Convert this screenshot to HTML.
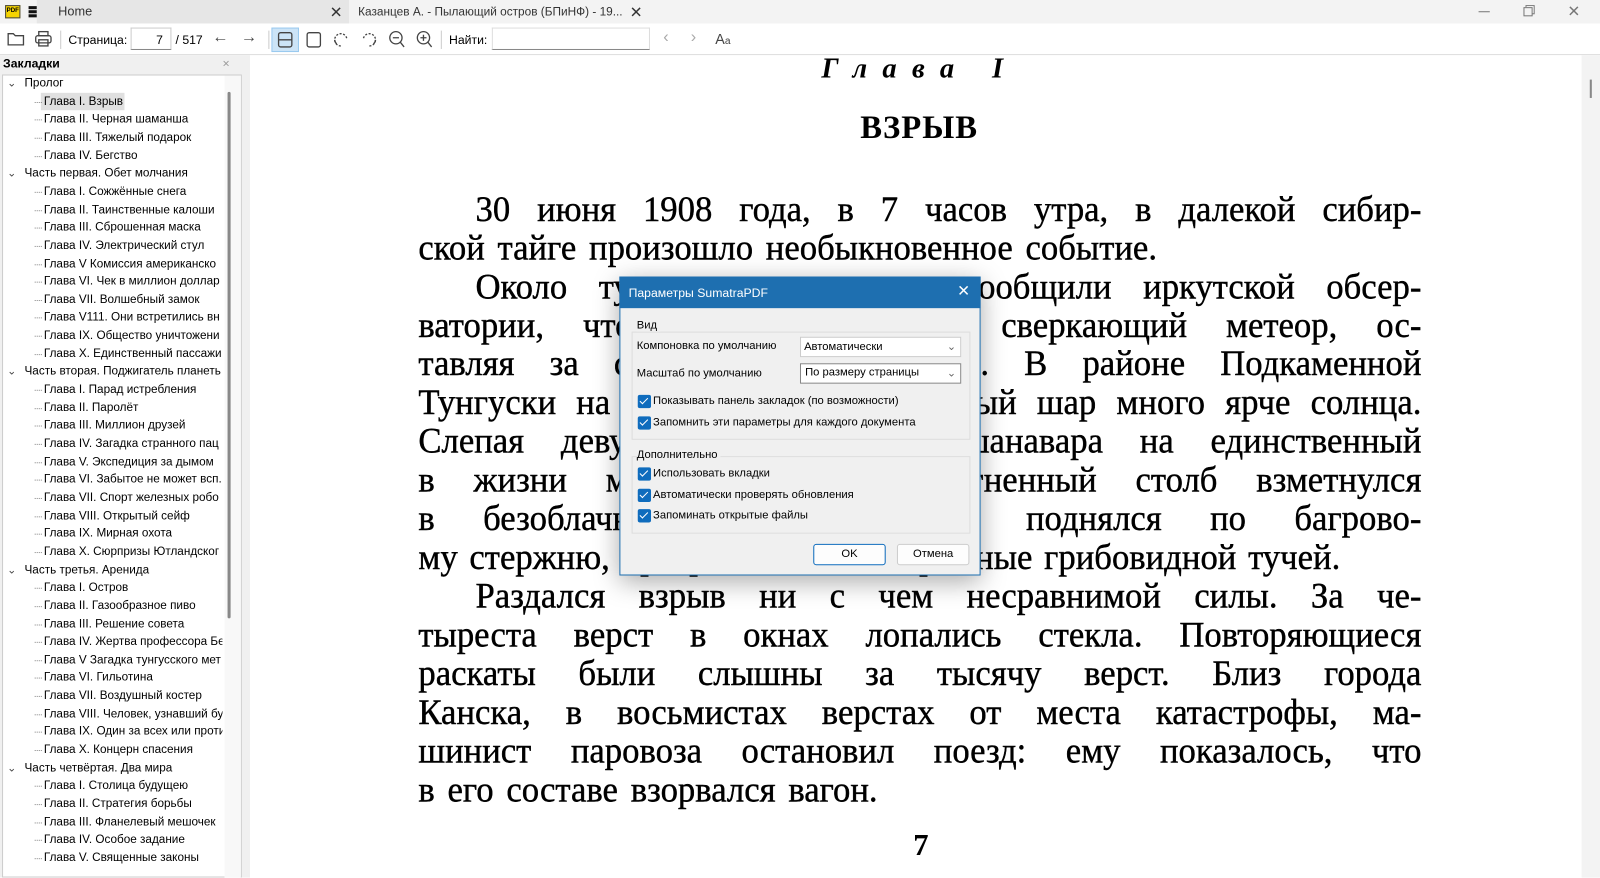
<!DOCTYPE html>
<html><head><meta charset="utf-8"><style>
*{box-sizing:border-box;margin:0;padding:0}
body{width:1600px;height:860px;overflow:hidden;background:#fff;font-family:"Liberation Sans","Noto Sans CJK SC",sans-serif;font-size:12px;color:#000}
#root{position:absolute;left:0;top:0;width:1568px;height:843px;transform:scale(1.0204);transform-origin:0 0}
.abs{position:absolute}
#tabs{left:0;top:0;width:1568px;height:23px;background:#f3f3f3}
#tb{left:0;top:23px;width:1568px;height:31px;background:#fff;border-bottom:1px solid #ddd}
.tree div{position:absolute;white-space:nowrap;font-size:11.5px;line-height:17px}
.pg{position:absolute;left:410px;width:983px;font-family:"Liberation Serif",serif;font-size:34px;line-height:38px;white-space:nowrap;text-align:justify;text-align-last:justify;transform:scaleY(1.05);-webkit-text-stroke:0.4px #000}
.nj{text-align-last:left}
.ico{position:absolute;stroke:#444;fill:none;stroke-width:1.3}
.cb{position:absolute;width:13px;height:13px;background:#0f6cbd;border-radius:2px}
.cb:after{content:"";position:absolute;left:4px;top:1px;width:3px;height:7px;border:solid #fff;border-width:0 1.5px 1.5px 0;transform:rotate(45deg)}
.dl{position:absolute;font-size:11px;white-space:nowrap}
</style></head><body><div id="root">
<div id="tabs" class="abs"></div>
<div class="abs" style="left:5px;top:5px;width:15px;height:13px;background:#f5d400;border:1px solid #444;font-size:6px;font-weight:bold;line-height:11px;text-align:center">PDF</div>
<div class="abs" style="left:28px;top:6px;width:14px;height:2.5px;background:#111;box-shadow:0 4px 0 #111,0 8px 0 #111"></div>
<div class="abs" style="left:36px;top:0;width:306px;height:23px;background:#e6e6e6"></div>
<div class="abs" style="left:57px;top:4px;font-size:12.5px;color:#333">Home</div>
<div class="abs" style="left:323px;top:3px;font-size:15px;color:#333">✕</div>
<div class="abs" style="left:351px;top:5px;font-size:11.6px;color:#333">Казанцев А. - Пылающий остров (БПиНФ) - 19...</div>
<div class="abs" style="left:617px;top:3px;font-size:15px;color:#333">✕</div>
<div class="abs" style="left:1449px;top:11px;width:11px;height:1px;background:#777"></div>
<div class="abs" style="left:1493px;top:7px;width:9px;height:9px;border:1px solid #777;box-shadow:2px -2px 0 -1px #fff,2px -2px 0 0 #777"></div>
<div class="abs" style="left:1536px;top:2px;font-size:15px;color:#777">✕</div>

<div id="tb" class="abs"></div>
<svg class="ico" style="left:6px;top:29px" width="20" height="18"><path d="M2 4h5l2 2h8v9H2z"/></svg>
<svg class="ico" style="left:33px;top:29px" width="20" height="18"><rect x="5" y="2" width="9" height="4"/><rect x="2" y="6" width="15" height="7" rx="2"/><rect x="5" y="10" width="9" height="6"/></svg>
<div class="abs" style="left:59px;top:30px;width:1px;height:18px;background:#ccc"></div>
<div class="abs" style="left:67px;top:32px;font-size:12px">Страница:</div>
<div class="abs" style="left:128px;top:27px;width:40px;height:22px;border:1px solid #ccc;border-bottom-color:#888"></div>
<div class="abs" style="left:153px;top:32px;font-size:12px">7</div>
<div class="abs" style="left:172px;top:32px;font-size:12px">/ 517</div>
<div class="abs" style="left:208px;top:28px;font-size:16px;color:#444">←</div>
<div class="abs" style="left:236px;top:28px;font-size:16px;color:#444">→</div>
<div class="abs" style="left:263px;top:30px;width:1px;height:18px;background:#ccc"></div>
<div class="abs" style="left:266px;top:27px;width:27px;height:24px;background:#cce4f7;border:1px solid #99c9ef"></div>
<svg class="ico" style="left:270px;top:29px" width="20" height="20"><rect x="3" y="3" width="13" height="14" rx="2"/><path d="M3 10h13"/></svg>
<svg class="ico" style="left:298px;top:29px" width="20" height="20"><rect x="3" y="3" width="13" height="14" rx="2"/></svg>
<svg class="ico" style="left:324px;top:29px" width="20" height="20"><path d="M10 16a6 6 0 1 1 6-6" stroke-dasharray="2 1.5"/><path d="M6 14a6 6 0 0 1-2-4"/></svg>
<svg class="ico" style="left:352px;top:29px" width="20" height="20"><path d="M10 16a6 6 0 1 0-6-6" stroke-dasharray="2 1.5"/><path d="M14 14a6 6 0 0 0 2-4"/></svg>
<svg class="ico" style="left:379px;top:29px" width="20" height="20"><circle cx="9" cy="8" r="6"/><path d="M6 8h6M13 12l4 5"/></svg>
<svg class="ico" style="left:406px;top:29px" width="20" height="20"><circle cx="9" cy="8" r="6"/><path d="M6 8h6M9 5v6M13 12l4 5"/></svg>
<div class="abs" style="left:432px;top:30px;width:1px;height:18px;background:#ccc"></div>
<div class="abs" style="left:440px;top:32px;font-size:12px">Найти:</div>
<div class="abs" style="left:482px;top:27px;width:155px;height:22px;border:1px solid #ddd;border-bottom-color:#888"></div>
<div class="abs" style="left:650px;top:28px;font-size:16px;color:#aaa">‹</div>
<div class="abs" style="left:677px;top:28px;font-size:16px;color:#aaa">›</div>
<div class="abs" style="left:701px;top:30px;font-size:14px;color:#444">A<span style="font-size:10px">a</span></div>

<div class="abs" style="left:0;top:54px;width:245px;height:806px;background:#f0f0f0"></div>
<div class="abs" style="left:3px;top:55px;font-weight:bold;font-size:12px">Закладки</div>
<div class="abs" style="left:218px;top:55px;font-size:12px;color:#999">×</div>
<div class="abs" style="left:2px;top:73px;width:235px;height:787px;background:#fff;border:1px solid #ccc"></div>
<div class="abs" style="left:220px;top:74px;width:16px;height:786px;background:#f8f8f8"></div>
<div class="abs" style="left:223px;top:90px;width:3px;height:516px;background:#888;border-radius:2px"></div>
<div class="abs" style="left:40px;top:91px;width:82px;height:17px;background:#e0e0e0"></div>
<div class="tree" id="tree"></div>

<div class="abs" style="left:1550px;top:54px;width:30px;height:806px;background:#f3f3f3"></div>
<div class="abs" style="left:1558px;top:78px;width:2px;height:18px;background:#888"></div>
<div class="abs" style="left:805px;top:52px;font-family:'Liberation Serif',serif;font-style:italic;font-weight:bold;font-size:28px;letter-spacing:15px">Глава I</div>
<div class="abs" style="left:843px;top:106px;font-family:'Liberation Serif',serif;font-weight:bold;font-size:32px;letter-spacing:1px">ВЗРЫВ</div>
<div class="pg" style="top:187px;padding-left:56px">30 июня 1908 года, в 7 часов утра, в далекой сибир-</div>
<div class="pg nj" style="top:225px;word-spacing:4px">ской тайге произошло необыкновенное событие.</div>
<div class="pg" style="top:263px;padding-left:56px">Около тунгусские охотники сообщили иркутской обсер-</div>
<div class="pg" style="top:301px">ватории, что видели огромный сверкающий метеор, ос-</div>
<div class="pg" style="top:338px">тавляя за собой огненный след. В районе Подкаменной</div>
<div class="pg" style="top:376px">Тунгуски на небе появился огненный шар много ярче солнца.</div>
<div class="pg" style="top:414px">Слепая девушка, сидевшая у шанавара на единственный</div>
<div class="pg" style="top:452px">в жизни миг увидела, как огненный столб взметнулся</div>
<div class="pg" style="top:490px">в безоблачное небо и затем поднялся по багрово-</div>
<div class="pg nj" style="top:528px;word-spacing:3px">му стержню, превратившись в огромные грибовидной тучей.</div>
<div class="pg" style="top:566px;padding-left:56px">Раздался взрыв ни с чем несравнимой силы. За че-</div>
<div class="pg" style="top:604px">тыреста верст в окнах лопались стекла. Повторяющиеся</div>
<div class="pg" style="top:642px">раскаты были слышны за тысячу верст. Близ города</div>
<div class="pg" style="top:680px">Канска, в восьмистах верстах от места катастрофы, ма-</div>
<div class="pg" style="top:718px">шинист паровоза остановил поезд: ему показалось, что</div>
<div class="pg nj" style="top:756px;word-spacing:4px">в его составе взорвался вагон.</div>
<div class="abs" style="left:895px;top:812px;font-family:'Liberation Serif',serif;font-weight:bold;font-size:30px">7</div>

<div class="abs" style="left:607px;top:271px;width:354px;height:293px;background:#f0f0f0;border:1px solid #1e6fb0;box-shadow:0 6px 24px rgba(0,0,0,.35)"></div>
<div class="abs" style="left:607px;top:271px;width:354px;height:31px;background:#1e6fb0"></div>
<div class="dl" style="left:616px;top:280px;color:#fff;font-size:12px">Параметры SumatraPDF</div>
<div class="abs" style="left:938px;top:276px;color:#fff;font-size:15px">✕</div>
<div class="abs" style="left:619px;top:325px;width:332px;height:106px;border:1px solid #ddd"></div>
<div class="dl" style="left:624px;top:313px;background:#f0f0f0;padding-right:3px">Вид</div>
<div class="dl" style="left:624px;top:333px">Компоновка по умолчанию</div>
<div class="abs" style="left:784px;top:330px;width:158px;height:20px;background:#fff;border:1px solid #ccc"></div>
<div class="dl" style="left:788px;top:334px">Автоматически</div>
<div class="dl" style="left:928px;top:333px;color:#666">⌄</div>
<div class="dl" style="left:624px;top:360px">Масштаб по умолчанию</div>
<div class="abs" style="left:784px;top:356px;width:158px;height:20px;background:#fff;border:1px solid #888"></div>
<div class="dl" style="left:789px;top:359px">По размеру страницы</div>
<div class="dl" style="left:928px;top:359px;color:#666">⌄</div>
<div class="cb" style="left:625px;top:387px"></div><div class="dl" style="left:640px;top:387px">Показывать панель закладок (по возможности)</div>
<div class="cb" style="left:625px;top:408px"></div><div class="dl" style="left:640px;top:408px">Запомнить эти параметры для каждого документа</div>
<div class="abs" style="left:619px;top:447px;width:332px;height:76px;border:1px solid #ddd"></div>
<div class="dl" style="left:624px;top:440px;background:#f0f0f0;padding-right:3px">Дополнительно</div>
<div class="cb" style="left:625px;top:458px"></div><div class="dl" style="left:640px;top:458px">Использовать вкладки</div>
<div class="cb" style="left:625px;top:479px"></div><div class="dl" style="left:640px;top:479px">Автоматически проверять обновления</div>
<div class="cb" style="left:625px;top:499px"></div><div class="dl" style="left:640px;top:499px">Запоминать открытые файлы</div>
<div class="abs" style="left:797px;top:533px;width:71px;height:21px;background:#fdfdfd;border:1.5px solid #0f6cbd;border-radius:3px;text-align:center;font-size:11px;line-height:18px">OK</div>
<div class="abs" style="left:879px;top:533px;width:71px;height:21px;background:#fdfdfd;border:1px solid #ccc;border-radius:3px;text-align:center;font-size:11px;line-height:19px">Отмена</div>
</div>
<script>
var items=[[0,"Пролог"],[1,"Глава I. Взрыв"],[1,"Глава II. Черная шаманша"],[1,"Глава III. Тяжелый подарок"],[1,"Глава IV. Бегство"],
[0,"Часть первая. Обет молчания"],[1,"Глава I. Сожжённые снега"],[1,"Глава II. Таинственные калоши"],[1,"Глава III. Сброшенная маска"],[1,"Глава IV. Электрический стул"],[1,"Глава V Комиссия американско"],[1,"Глава VI. Чек в миллион доллар"],[1,"Глава VII. Волшебный замок"],[1,"Глава V111. Они встретились вн"],[1,"Глава IX. Общество уничтожени"],[1,"Глава X. Единственный пассажи"],
[0,"Часть вторая. Поджигатель планеть"],[1,"Глава I. Парад истребления"],[1,"Глава II. Паролёт"],[1,"Глава III. Миллион друзей"],[1,"Глава IV. Загадка странного пац"],[1,"Глава V. Экспедиция за дымом"],[1,"Глава VI. Забытое не может всп."],[1,"Глава VII. Спорт железных робо"],[1,"Глава VIII. Открытый сейф"],[1,"Глава IX. Мирная охота"],[1,"Глава X. Сюрпризы Ютландског"],
[0,"Часть третья. Аренида"],[1,"Глава I. Остров"],[1,"Глава II. Газообразное пиво"],[1,"Глава III. Решение совета"],[1,"Глава IV. Жертва профессора Бе"],[1,"Глава V Загадка тунгусского мет"],[1,"Глава VI. Гильотина"],[1,"Глава VII. Воздушный костер"],[1,"Глава VIII. Человек, узнавший бу"],[1,"Глава IX. Один за всех или проти"],[1,"Глава X. Концерн спасения"],
[0,"Часть четвёртая. Два мира"],[1,"Глава I. Столица будущею"],[1,"Глава II. Стратегия борьбы"],[1,"Глава III. Фланелевый мешочек"],[1,"Глава IV. Особое задание"],[1,"Глава V. Священные законы"]];
var h="";items.forEach(function(it,i){var y=74+i*17.65;
if(it[0]==0){h+='<div style="left:7px;top:'+y+'px;color:#444;font-size:11px">⌄</div><div style="left:24px;top:'+y+'px">'+it[1]+'</div>';}
else{h+='<div style="left:34px;top:'+(y+8)+'px;width:7px;border-top:1px dotted #888"></div><div style="left:43px;top:'+y+'px;width:175px;overflow:hidden">'+it[1]+'</div>';}});
document.getElementById('tree').innerHTML=h;
</script>
</body></html>
